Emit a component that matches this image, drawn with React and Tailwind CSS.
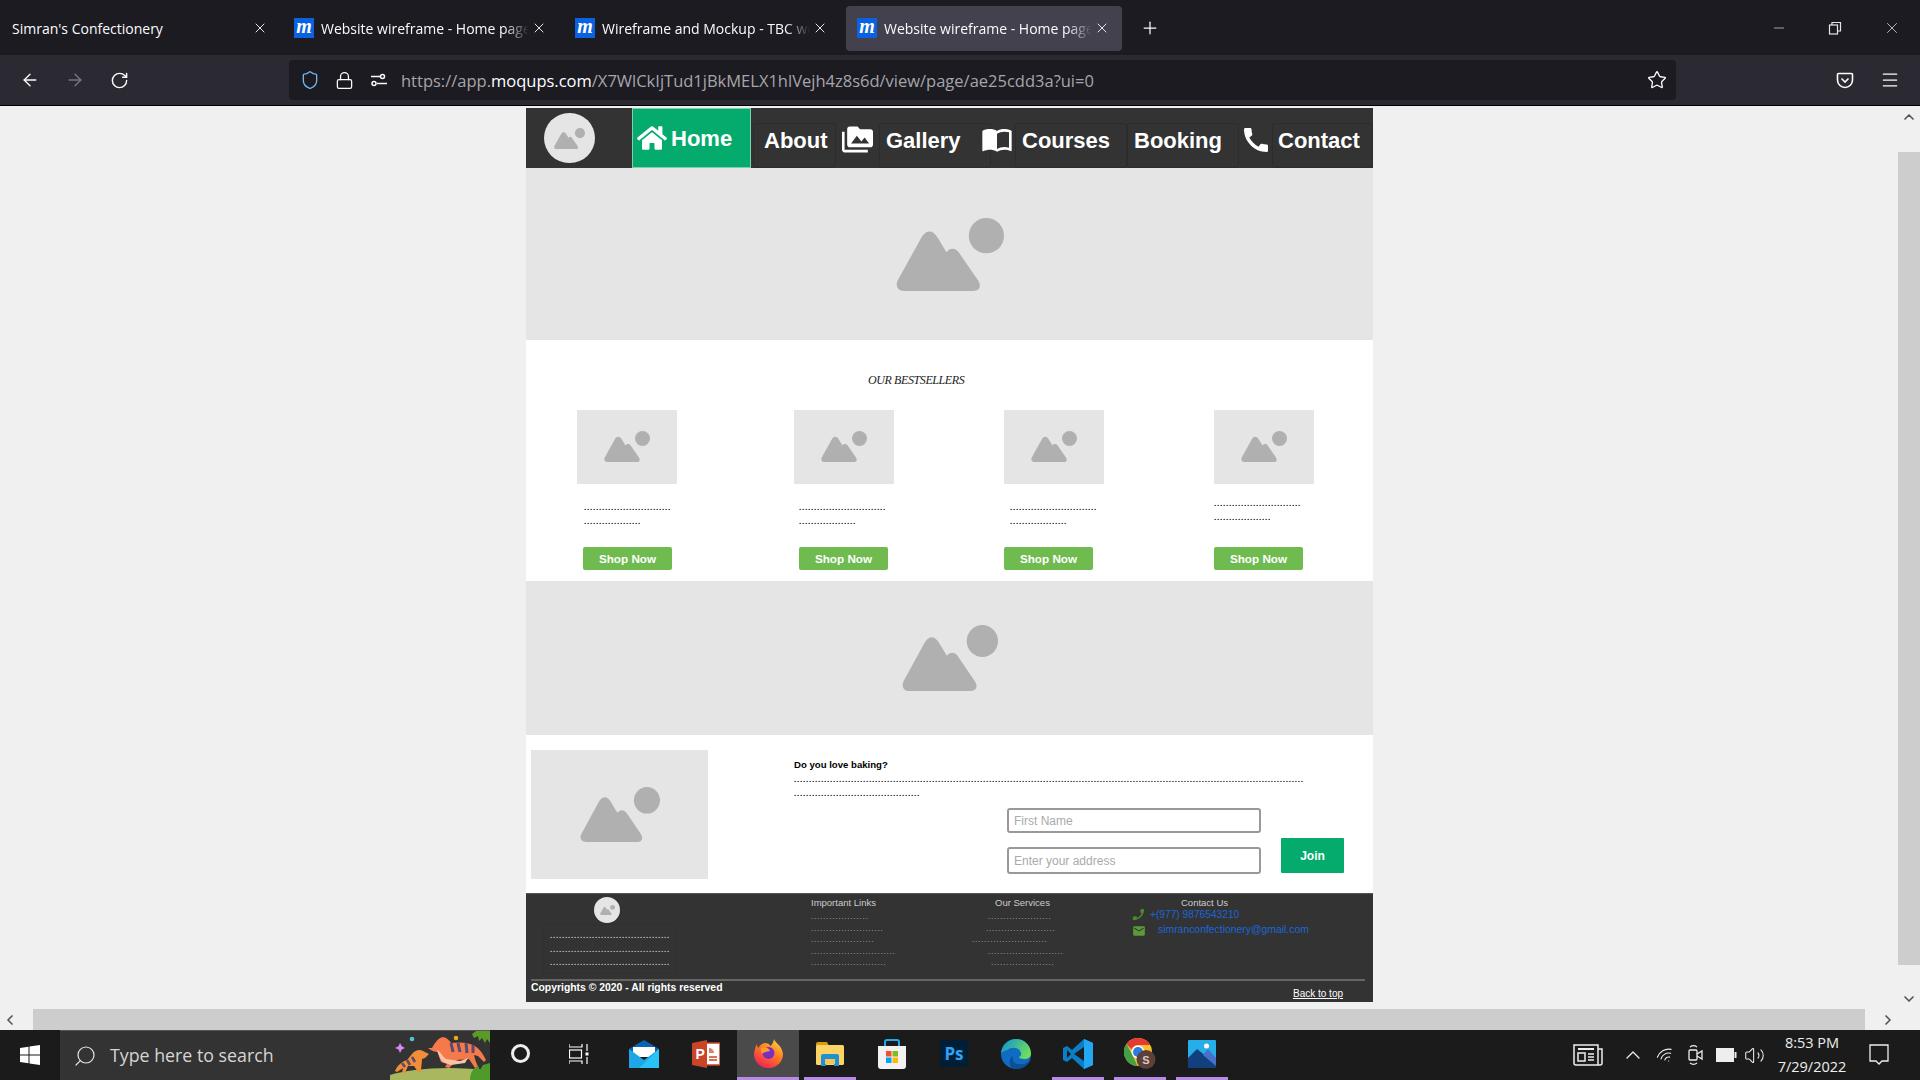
import {
  ArrowLeft,
  ArrowRight,
  ChevronDown,
  ChevronLeft,
  ChevronRight,
  ChevronUp,
  Lock,
  Menu,
  Minus,
  Plus,
  RotateCw,
  Search,
  Shield,
  Star,
  Volume2,
  Wifi,
  X,
} from 'lucide-react';
import { FaHome } from 'react-icons/fa';
import { MdCall, MdEmail, MdImportContacts, MdPermMedia } from 'react-icons/md';

function Placeholder({ className }) {
  return (
    <svg viewBox="0 0 46 31" className={className} preserveAspectRatio="none" fill="#b0b0b0">
      <path d="M3.500 31C.5 31-.5 28.500 1 26L11 8C13 5 15.500 5 17.500 8L21.500 14.500C23 12.500 25.500 12.500 27 15L35 26.500C36.500 29 35.500 31 33 31Z" />
      <circle cx="38.500" cy="7.500" r="7.500" />
    </svg>
  );
}

// dot rows are 3px per character
function Dots({ n, className = '' }) {
  return <div className={`whitespace-nowrap text-[8px] font-bold leading-[14px] tracking-[0.776px] ${className}`}>{'.'.repeat(n)}</div>;
}

function FooterDots({ n, className = '' }) {
  return <div className={`h-[11.600px] whitespace-nowrap text-[8px] leading-[11px] tracking-[0.800px] text-[#bbbbaa] ${className}`}>{'.'.repeat(n)}</div>;
}

function Favicon() {
  return (
    <span className="flex h-[20px] w-[20px] shrink-0 items-center justify-center bg-[#0a62e0] font-['Liberation_Serif',serif] text-[20px] font-bold italic leading-none text-white">
      <span className="-mt-[4px]">m</span>
    </span>
  );
}

function Tab({ title, width, active, favicon = true }) {
  return (
    <div className={`flex h-[45px] shrink-0 items-center rounded-[4px] ${width} ${active ? 'bg-[#42414d] pl-[11px]' : 'pl-[12px]'}`}>
      {favicon && <Favicon />}
      <span
        className={`overflow-hidden whitespace-nowrap text-[14px] text-[#fbfbfe] ${favicon ? 'ml-[7px] w-[208px] [mask-image:linear-gradient(to_right,black_88%,transparent)]' : 'w-[238px]'}`}
      >
        {title}
      </span>
      <X size={16} strokeWidth={1.500} className="ml-[2px] shrink-0 text-[#e5e5e5]" />
    </div>
  );
}

function TabBar() {
  return (
    <div className="flex h-[55px] items-center bg-[#1c1b22] pt-[1px] text-[#fbfbfe]">
      <Tab title="Simran's Confectionery" width="w-[282px]" favicon={false} />
      <Tab title="Website wireframe - Home page" width="w-[281px]" />
      <Tab title="Wireframe and Mockup - TBC web" width="w-[283px]" />
      <Tab title="Website wireframe - Home page" width="w-[276px]" active />
      <Plus size={20} strokeWidth={1.500} className="ml-[18px]" />
      <div className="ml-auto flex items-center gap-[41px] pr-[19px] text-[#e5e5e5]">
        <Minus size={16} strokeWidth={1} />
        <svg width="14" height="14" viewBox="0 0 14 14" fill="none" stroke="currentColor" strokeWidth="1.200">
          <rect x="1.500" y="4" width="8" height="9" />
          <path d="M4 4V1.500h8.500V10H9.500" />
        </svg>
        <X size={18} strokeWidth={1} />
      </div>
    </div>
  );
}

function Toolbar() {
  return (
    <div className="flex h-[51px] items-center border-b border-black bg-[#2b2a33] text-[#fbfbfe]">
      <ArrowLeft size={20} strokeWidth={1.600} className="ml-[20px]" />
      <ArrowRight size={20} strokeWidth={1.600} className="ml-[25px] text-[#77767d]" />
      <RotateCw size={19} strokeWidth={1.800} className="ml-[25px]" />
      <div className="ml-[160px] flex h-[40px] w-[1387px] items-center rounded-[4px] bg-[#1c1b22] pl-[11px]">
        <Shield size={20} strokeWidth={1.600} className="text-[#6fb5ee]" />
        <Lock size={19} strokeWidth={1.600} className="ml-[15px]" />
        <svg width="18" height="14" viewBox="0 0 18 14" fill="none" stroke="currentColor" strokeWidth="1.500" className="ml-[16px]">
          <circle cx="12.500" cy="3.500" r="2" />
          <path d="M1 3.500h9" />
          <circle cx="4" cy="10.500" r="2" />
          <path d="M7 10.500h10" />
        </svg>
        <span className="ml-[13px] mt-[2px] w-[1246px] whitespace-nowrap text-[16.500px] text-[#a6a5ab]">
          https://app.<span className="text-white">moqups.com</span>/X7WlCkIjTud1jBkMELX1hlVejh4z8s6d/view/page/ae25cdd3a?ui=0
        </span>
        <Star size={20} strokeWidth={1.600} />
      </div>
      <svg width="18" height="18" viewBox="0 0 18 18" fill="none" stroke="currentColor" strokeWidth="1.600" className="ml-[160px]">
        <path d="M2.500 2.500h13a1 1 0 0 1 1 1V9a7.500 7.500 0 0 1-15 0V3.500a1 1 0 0 1 1-1Z" />
        <path d="M5.500 7.500L9 11l3.500-3.500" />
      </svg>
      <Menu size={20} strokeWidth={1.500} className="ml-[26px]" />
    </div>
  );
}

function NavItem({ children, className }) {
  return (
    <div className={`flex h-[45px] shrink-0 items-center rounded-[3px] border border-[#2c2c2c] pb-[10px] text-[22px] font-bold text-white ${className}`}>
      {children}
    </div>
  );
}

function NavIcon({ children, className }) {
  return <div className={`flex h-[45px] shrink-0 items-start justify-center pt-[1px] text-white ${className}`}>{children}</div>;
}

function SiteNav() {
  return (
    <nav className="flex h-[60px] items-end bg-[#333333]">
      <div className="flex h-[60px] w-[106px] items-center pl-[18px]">
        <span className="flex h-[50px] w-[51px] items-center justify-center rounded-full bg-[#e5e5e5]">
          <Placeholder className="h-[21px] w-[31px]" />
        </span>
      </div>
      <div className="flex h-[60px] w-[119px] items-center border border-[#7fd0b0] bg-[#05ab6c] pl-[4px] text-[22px] font-bold text-white">
        <FaHome size={30} />
        <span className="ml-[4px]">Home</span>
      </div>
      <NavItem className="ml-[2px] w-[83px] pl-[10px]">About</NavItem>
      <NavIcon className="w-[43px]">
        <MdPermMedia size={31} className="-ml-[1px]" />
      </NavIcon>
      <NavItem className="w-[112px] pl-[6px]">Gallery</NavItem>
      <NavIcon className="w-[24px]">
        <MdImportContacts size={32} className="-ml-[12px] -mt-[1px] shrink-0" />
      </NavIcon>
      <NavItem className="w-[112px] pl-[6px]">Courses</NavItem>
      <NavItem className="w-[112px] pl-[6px]">Booking</NavItem>
      <NavIcon className="w-[33px]">
        <MdCall size={32} className="shrink-0" />
      </NavIcon>
      <NavItem className="w-[101px] pl-[5px]">Contact</NavItem>
    </nav>
  );
}

function Product({ textClass, btnClass }) {
  return (
    <div>
      <div className="flex h-[74px] w-[100px] items-center justify-center bg-[#e5e5e5]">
        <Placeholder className="mb-[1px] h-[31px] w-[46px]" />
      </div>
      <div className={textClass}>
        <Dots n={29} />
        <Dots n={19} />
      </div>
      <div className={`flex h-[23px] w-[89px] items-center justify-center rounded-[2px] bg-[#6fbb4f] text-[11.700px] font-bold text-white ${btnClass}`}>
        Shop Now
      </div>
    </div>
  );
}

function Bestsellers() {
  return (
    <section className="h-[241px] bg-white">
      <h2 className="h-[70px] pl-[342px] pt-[33px] font-['Liberation_Serif',serif] text-[12px] italic leading-[14px] tracking-[-0.400px] text-[#222222]">
        OUR BESTSELLERS
      </h2>
      <div className="grid grid-cols-[217px_210px_210px_100px] pl-[51px]">
        <Product textClass="ml-[7px] mt-[17px]" btnClass="ml-[6px] mt-[18px]" />
        <Product textClass="ml-[5px] mt-[17px]" btnClass="ml-[5px] mt-[18px]" />
        <Product textClass="ml-[6px] mt-[17px]" btnClass="mt-[18px]" />
        <Product textClass="mt-[13px]" btnClass="mt-[22px]" />
      </div>
    </section>
  );
}

function BakingForm() {
  return (
    <section className="flex h-[158px] bg-white pl-[5px] pt-[15px]">
      <div className="flex h-[129px] w-[177px] items-center justify-center bg-[#e5e5e5]">
        <Placeholder className="h-[55px] w-[80px]" />
      </div>
      <div className="ml-[86px] w-[550px]">
        <p className="mt-[8px] text-[9.600px] font-bold leading-[14px] text-black">Do you love baking?</p>
        <Dots n={170} className="mt-[1px]" />
        <Dots n={42} />
        <div className="mt-[7px] flex items-end pl-[213px]">
          <div className="flex flex-col gap-[14px]">
            <input
              placeholder="First Name"
              className="h-[25px] w-[254px] rounded-[3px] border-2 border-[#999999] pl-[5px] text-[12px] outline-none placeholder:text-[#aaaaaa]"
            />
            <input
              placeholder="Enter your address"
              className="h-[27px] w-[254px] rounded-[3px] border-2 border-[#999999] pl-[5px] text-[12px] outline-none placeholder:text-[#aaaaaa]"
            />
          </div>
          <div className="mb-[1px] ml-[20px] flex h-[35px] w-[64px] items-center justify-center rounded-[1px] bg-[#05ab6c] text-[12px] font-bold text-white">
            Join
          </div>
        </div>
      </div>
    </section>
  );
}

function SiteFooter() {
  return (
    <footer className="h-[109px] border-t border-[#555555] bg-[#333333]">
      <div className="flex h-[85px]">
        <div className="w-[285px]">
          <span className="ml-[68px] mt-[3px] flex h-[26px] w-[26px] items-center justify-center rounded-full bg-[#e5e5e5]">
            <Placeholder className="h-[10px] w-[15px]" />
          </span>
          <div className="ml-[17px] mt-[1px] h-[50px] w-[134px] rounded-[2px] border border-[#2e312e] pl-[6px] pt-[4px] text-[#d0d0c8]">
            <Dots n={40} className="h-[13.500px]" />
            <Dots n={40} className="h-[13.500px]" />
            <Dots n={40} className="h-[13.500px]" />
          </div>
        </div>
        <div className="w-[161px] pt-[3px]">
          <p className="mb-[2px] text-[9.500px] leading-[12px] text-[#cccccc]">Important Links</p>
          <FooterDots n={19} />
          <FooterDots n={24} />
          <FooterDots n={21} />
          <FooterDots n={28} />
          <FooterDots n={25} />
        </div>
        <div className="w-[161px] pt-[3px]">
          <p className="mb-[2px] ml-[23px] text-[9.500px] leading-[12px] text-[#cccccc]">Our Services</p>
          <FooterDots n={21} className="ml-[16px]" />
          <FooterDots n={23} className="ml-[14px]" />
          <FooterDots n={25} />
          <FooterDots n={25} className="ml-[16px]" />
          <FooterDots n={21} className="ml-[19px]" />
        </div>
        <div className="pt-[3px]">
          <p className="ml-[48px] text-[9.500px] leading-[12px] text-[#cccccc]">Contact Us</p>
          <div className="-mt-[2px] flex items-center text-[10.200px] leading-[14px] text-[#1a66d9]">
            <MdCall size={15} className="-ml-[2px] -scale-x-100 text-[#4a8a2e]" />
            <span className="ml-[4px]">+(977) 9876543210</span>
          </div>
          <div className="-mt-[1px] flex items-center text-[10.400px] leading-[14px] text-[#1a66d9]">
            <MdEmail size={14} className="-ml-[1px] mt-[3px] text-[#5c9a38]" />
            <span className="ml-[12px]">simranconfectionery@gmail.com</span>
          </div>
        </div>
      </div>
      <div className="ml-[5px] h-[2px] w-[834px] bg-[#666666]" />
      <div className="flex justify-between pl-[5px] pr-[30px] pt-[1px]">
        <span className="text-[10.400px] font-bold leading-[12px] text-white">Copyrights © 2020 - All rights reserved</span>
        <a className="mt-[6px] text-[10px] leading-[11px] text-white underline">Back to top</a>
      </div>
    </footer>
  );
}

function Mail() {
  return (
    <svg width="30" height="28" viewBox="0 0 30 28">
      <path d="M0 9L15 0l15 9v6H0Z" fill="#0a63b5" />
      <path d="M4 7h22v10H4Z" fill="#fff" />
      <path d="M0 9l15 11L30 9v19H0Z" fill="#1fa6e6" />
      <path d="M30 9v19H10Z" fill="#2ac3f5" />
    </svg>
  );
}

function Powerpoint() {
  return (
    <svg width="28" height="28" viewBox="0 0 28 28">
      <rect x="13" y="3" width="15" height="22" fill="#fff" stroke="#c8452a" strokeWidth="1.500" />
      <path d="M17 8a5 5 0 0 1 5 5h-5Z" fill="#e0805f" />
      <path d="M17 17h8M17 20h8" stroke="#c8452a" strokeWidth="1.500" />
      <path d="M0 3l15-3v28L0 25Z" fill="#c8452a" />
      <text x="3.500" y="19" fontSize="14" fontWeight="700" fill="#fff" fontFamily="Liberation Sans, sans-serif">P</text>
    </svg>
  );
}

function Firefox() {
  return (
    <svg width="29" height="29" viewBox="0 0 29 29">
      <defs>
        <linearGradient id="fx" x1="0.8" y1="0" x2="0.2" y2="1">
          <stop offset="0" stopColor="#ffd43a" />
          <stop offset="0.45" stopColor="#ff7a20" />
          <stop offset="1" stopColor="#f0195e" />
        </linearGradient>
      </defs>
      <path d="M20 0c1 4 8 6 9 15a14.500 14 0 1 1-28-5c.5-2 1-3 2-5 0 2 .5 3 1.500 4 1-3 3-4 6-5 3 0 5 1 6 3 2-2 3-4 3.500-7Z" fill="url(#fx)" />
      <circle cx="14.500" cy="14" r="6" fill="#7a2fc4" />
      <path d="M7 9c3-1 8-1 9 3-3 1-7 1-8 3-1-2-1.500-4-1-6Z" fill="#ff9d2a" />
    </svg>
  );
}

function Files() {
  return (
    <svg width="28" height="24" viewBox="0 0 28 24">
      <path d="M0 2a2 2 0 0 1 2-2h9l2 4H0Z" fill="#d69e13" />
      <rect y="3" width="28" height="20" rx="1.500" fill="#fbd465" />
      <path d="M5 24V14a2 2 0 0 1 2-2h14a2 2 0 0 1 2 2v10h-5v-7h-8v7Z" fill="#1f8fd6" />
      <rect x="9" y="17" width="10" height="5" fill="#f4c550" />
    </svg>
  );
}

function Store() {
  return (
    <svg width="28" height="30" viewBox="0 0 28 30">
      <path d="M7 7V3a2 2 0 0 1 2-2h10a2 2 0 0 1 2 2v4" fill="none" stroke="#22a9e6" strokeWidth="2" />
      <path d="M0 7h28v20a3 3 0 0 1-3 3H3a3 3 0 0 1-3-3Z" fill="#f2f2f2" />
      <rect x="8" y="12" width="5.500" height="5.500" fill="#f2502a" />
      <rect x="14.500" y="12" width="5.500" height="5.500" fill="#7fba22" />
      <rect x="8" y="18.500" width="5.500" height="5.500" fill="#00a4ef" />
      <rect x="14.500" y="18.500" width="5.500" height="5.500" fill="#ffb902" />
    </svg>
  );
}

function Edge() {
  return (
    <svg width="30" height="30" viewBox="0 0 30 30">
      <defs>
        <linearGradient id="edgeTop" x1="0.1" y1="0.2" x2="1" y2="0.6">
          <stop offset="0" stopColor="#1a9bc6" />
          <stop offset="1" stopColor="#6fe05a" />
        </linearGradient>
      </defs>
      <circle cx="15" cy="15" r="15" fill="#0f6cc2" />
      <path d="M0 14C1 5 8 0 15 0c8 0 15 6 15 15 0 3-3 5-7 5-3 0-5-1-5-2 2-1 3-3 1-6-2-4-9-4-13-1-3 1-5 2-6 3Z" fill="url(#edgeTop)" />
      <path d="M30 20c-2 6-8 10-14 10-3 0-6-1-7-4-1-3 0-8 3-9-1 4 1 8 6 8 5 1 9-1 12-5Z" fill="#0c4f95" />
    </svg>
  );
}

function VsCode() {
  return (
    <svg width="30" height="30" viewBox="0 0 30 30">
      <path d="M21 0l9 4v22l-9 4-12-11-5 4-4-2v-12l4-2 5 4Z" fill="#0a7fc9" />
      <path d="M21 0l9 4v22l-9 4Z" fill="#23a7f2" />
      <path d="M21 8L11 15l10 7Z" fill="#1c1c1c" />
      <path d="M4 11l4 4-4 4Z" fill="#1c1c1c" />
    </svg>
  );
}

function Chrome() {
  return (
    <svg width="32" height="31" viewBox="0 0 32 31">
      <circle cx="14" cy="14" r="14" fill="#fbc02d" />
      <path d="M14 0a14 14 0 0 1 12.100 7H14a7 7 0 0 0-6.500 4.500L2.500 6A14 14 0 0 1 14 0Z" fill="#e53935" />
      <path d="M2.500 6l6 11 5 11A14 14 0 0 1 2.500 6Z" fill="#43a047" />
      <circle cx="14" cy="14" r="6.500" fill="#fff" />
      <circle cx="14" cy="14" r="5" fill="#2a7de1" />
      <circle cx="22" cy="21.500" r="9.500" fill="#5d4037" />
      <text x="22" y="25.500" textAnchor="middle" fontSize="11" fontWeight="700" fill="#d7ccc8" fontFamily="Liberation Sans, sans-serif">S</text>
    </svg>
  );
}

function Photos() {
  return (
    <svg width="28" height="28" viewBox="0 0 28 28">
      <rect width="28" height="28" rx="1" fill="#27ade8" />
      <circle cx="18.500" cy="6" r="2.500" fill="#fff" />
      <path d="M0 18L9 9l19 15v4H0Z" fill="#12407f" />
      <path d="M15 15l5-6 8 9v8Z" fill="#4a6fc8" />
    </svg>
  );
}

// tigers in the search box, x/y are px from the doodle's corner
function Doodle() {
  return (
    <svg width="100" height="49" viewBox="0 0 100 49" className="shrink-0">
      <path d="M0 49V44C20 38 60 34 100 40V49Z" fill="#a9b85e" />
      <path d="M10 12l1.800 3.300 3.200 1.700-3.200 1.500-1.800 3.500-1.500-3.500-3.500-1.500 3.500-1.700Z" fill="#d68bf0" />
      <circle cx="22" cy="8" r="2.300" fill="#4fc3d9" />
      <circle cx="66" cy="7" r="2.300" fill="#f0a818" />
      <path d="M82 3l4-3h14v12l-3-4-2 4-3-5-3 3-1-5-4 2Z" fill="#5c9a28" />
      <path d="M42 17c2-4 5-8 8-10l3-1 3 1c2 1 4 3 5 5 8-1 16-1 22 2 6 3 9 7 13 15l-2 2-6-6-4-1c1 5 3 10 5 13h-4l-6-9-12 1c-3 3-5 5-8 8l-4-1 2-3-6-2c-2-4-2-8-3-10-3 0-6-1-10-4Z" fill="#f5794a" />
      <path d="M47 19c3 1 5 6 9 9l14 2 8-3-3 5-14 2-8-3c-3-3-5-8-6-12Z" fill="#f8c4a8" />
      <path d="M61 12l2 9M68 12l2 9M76 12l1 10M83 14l0 8" stroke="#5a4a6e" strokeWidth="3" />
      <path d="M5 40c2-5 6-9 12-11l5-6c3-4 8-5 11-3l6 3-4 4-3 1c0 4-1 8-1 13h-3l-4-6-6 0-3 7h-3l1-5-6 4Z" fill="#f28d3a" />
      <path d="M12 32l3 4M17 29l3 5M22 26l3 5" stroke="#5a4a6e" strokeWidth="2.500" />
      <path d="M80 49c0-7 3-12 8-14l2 4 3-5 7-2v17Z" fill="#4f9a2a" />
    </svg>
  );
}

function Tile({ children, active, open, wide, className = 'w-[62px]' }) {
  return (
    <div className={`relative flex h-[50px] shrink-0 items-center justify-center pb-[3px] ${className} ${active ? 'bg-[#4a4a4a]' : ''}`}>
      {children}
      {open && <span className={`absolute bottom-0 h-[3px] bg-[#b88ae8] ${wide ? 'inset-x-0' : 'inset-x-[5px]'}`} />}
    </div>
  );
}

function Taskbar() {
  return (
    <div className="flex h-[50px] items-center bg-[#1b1b1b] text-white">
      <div className="flex w-[60px] justify-center">
        <svg width="20" height="20" viewBox="0 0 20 20" fill="#fff">
          <path d="M0 3l8.500-1.200V9.500H0ZM9.500 1.600L20 0v9.500H9.500ZM0 10.500h8.500v7.700L0 17ZM9.500 10.500H20V20L9.500 18.400Z" />
        </svg>
      </div>
      <div className="flex h-[50px] w-[430px] items-center overflow-hidden border-t border-[#555555] bg-[#333333]">
        <Search size={24} strokeWidth={1.200} className="ml-[13px] shrink-0 -scale-x-100 text-[#e5e5e5]" />
        <span className="ml-[13px] w-[280px] shrink-0 text-[17.800px] text-[#d5d5d5]">Type here to search</span>
        <Doodle />
      </div>
      <Tile className="w-[61px]">
        <span className="h-[19px] w-[19px] rounded-full border-[3px] border-[#eeeeee]" />
      </Tile>
      <Tile>
        <svg width="20" height="20" viewBox="0 0 20 20" fill="none" stroke="#fff" strokeWidth="1.200" className="-ml-[6px]">
          <path d="M0 0v3h13V0M0 20v-3h13v3" />
          <rect x="0.500" y="6" width="12" height="8" />
          <path d="M18 0v7M18 13v7" />
          <rect x="16.500" y="8.500" width="3" height="3" fill="#fff" stroke="none" />
        </svg>
      </Tile>
      <Tile><Mail /></Tile>
      <Tile><Powerpoint /></Tile>
      <Tile active open wide><Firefox /></Tile>
      <Tile open><Files /></Tile>
      <Tile><Store /></Tile>
      <Tile>
        <span className="flex h-[27px] w-[28px] items-center justify-center rounded-[3px] bg-[#001e36] text-[17px] font-bold leading-none text-[#2fa3f7]">Ps</span>
      </Tile>
      <Tile><Edge /></Tile>
      <Tile open><VsCode /></Tile>
      <Tile open><Chrome /></Tile>
      <Tile open><Photos /></Tile>
      <div className="ml-auto flex items-center pr-[31px] text-[#eeeeee]">
        <svg width="30" height="22" viewBox="0 0 30 22" fill="none" stroke="currentColor" strokeWidth="1.500">
          <path d="M1 1h24v20H3a2 2 0 0 1-2-2ZM25 5h4v14a2 2 0 0 1-2 2h-2" />
          <path d="M5 5h16" strokeWidth="2" />
          <rect x="5" y="9" width="7" height="8" />
          <path d="M15 10h6M15 13h6M15 16h6" />
        </svg>
        <ChevronUp size={24} strokeWidth={1.300} className="ml-[18px]" />
        <Wifi size={19} strokeWidth={1.400} className="ml-[11px] rotate-[-30deg]" />
        <svg width="16" height="20" viewBox="0 0 16 20" fill="none" stroke="currentColor" strokeWidth="1.300" className="ml-[13px]">
          <path d="M2 2c2-1.500 5-1.500 7 0M2 18c2 1.500 5 1.500 7 0" />
          <rect x="1" y="5" width="8" height="10" rx="1" />
          <path d="M9 9l5-3v8l-5-3" />
        </svg>
        <svg width="21" height="14" viewBox="0 0 21 14" className="ml-[12px]">
          <rect x="0.500" y="0.500" width="17" height="13" fill="currentColor" stroke="currentColor" />
          <rect x="18.500" y="4" width="2" height="6" fill="currentColor" />
        </svg>
        <Volume2 size={21} strokeWidth={1.200} className="ml-[7px]" />
        <div className="ml-[8px] flex w-[78px] flex-col items-center text-[14.500px] leading-[24px] text-[#eeeeee]">
          <span>8:53 PM</span>
          <span>7/29/2022</span>
        </div>
        <svg width="20" height="22" viewBox="0 0 20 22" fill="none" stroke="currentColor" strokeWidth="1.300" className="ml-[18px]">
          <path d="M1 1h18v16h-6l-3 3-3-3H1Z" />
        </svg>
      </div>
    </div>
  );
}

export default function App() {
  return (
    <div className="h-[1080px] w-[1920px] overflow-hidden bg-[#f0f0f0] font-['Liberation_Sans',Arial,sans-serif]">
      <div className="font-['Open_Sans','Noto_Sans',sans-serif]">
        <TabBar />
        <Toolbar />
      </div>
      <div className="flex h-[903px]">
        <main className="w-[1898px] pt-[2px]">
          <div className="ml-[526px] w-[847px]">
            <SiteNav />
            <div className="flex h-[172px] items-center justify-center bg-[#e5e5e5] pb-[16px]">
              <Placeholder className="mt-[16px] h-[73px] w-[108px]" />
            </div>
            <Bestsellers />
            <div className="flex h-[154px] items-center justify-center bg-[#e5e5e5]">
              <Placeholder className="h-[66px] w-[96px]" />
            </div>
            <BakingForm />
            <SiteFooter />
          </div>
        </main>
        <aside className="flex w-[22px] flex-col items-center bg-[#f0f0f0] text-[#555555]">
          <div className="flex h-[46px] w-full justify-center pt-[3px]">
            <ChevronUp size={16} strokeWidth={2.500} />
          </div>
          <div className="h-[813px] w-full bg-[#cdcdcd]" />
          <ChevronDown size={16} strokeWidth={2.500} className="mt-[26px]" />
        </aside>
      </div>
      <div className="flex h-[21px] items-center bg-[#f0f0f0] text-[#555555]">
        <div className="w-[33px] pl-[2px]">
          <ChevronLeft size={16} strokeWidth={2.500} />
        </div>
        <div className="h-[21px] w-[1832px] bg-[#cdcdcd]" />
        <ChevronRight size={16} strokeWidth={2.500} className="ml-[15px]" />
      </div>
      <div className="font-['Open_Sans','Noto_Sans',sans-serif]">
        <Taskbar />
      </div>
    </div>
  );
}
